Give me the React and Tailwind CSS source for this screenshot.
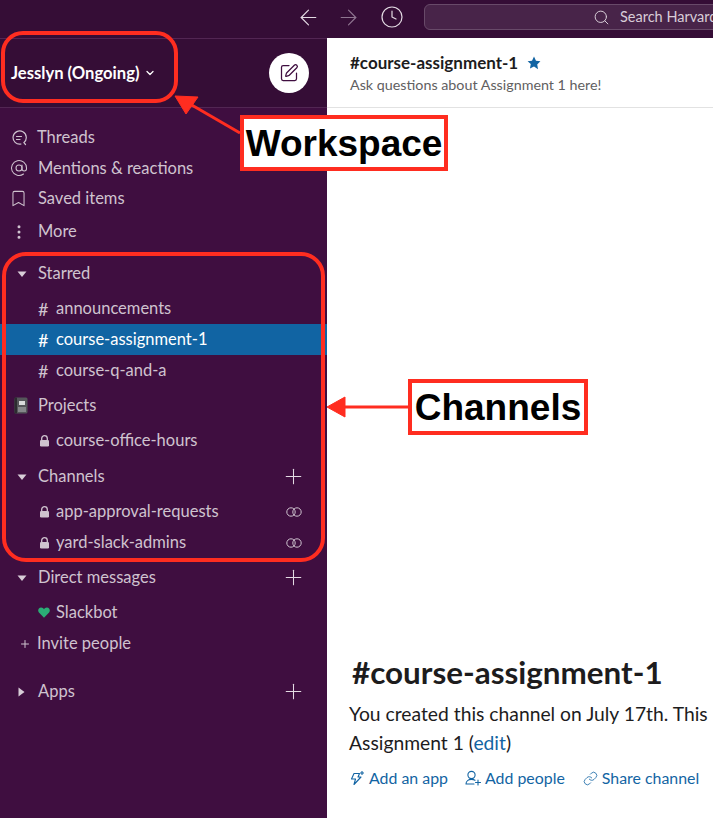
import React from 'react';
import { ArrowLeft, ArrowRight, AtSign, Bookmark, ChevronDown, Clock, EllipsisVertical, Link, Plus, Search, SquarePen } from 'lucide-react';

const Caret = ({ open = true }) => (
  <svg width="10" height="10" viewBox="0 0 10 10" className="text-[#d8cdd8]">
    {open ? <path d="M0.5 2.5h9L5 8z" fill="currentColor" /> : <path d="M1.5 0.5v9L7.5 5z" fill="currentColor" />}
  </svg>
);

const HashIcon = () => <span className="w-[18px] text-[18px] leading-none">#</span>;

const LockIcon = () => (
  <span className="flex w-[18px]">
    <svg width="11" height="12" viewBox="0 0 11 12" className="ml-[1px]">
      <path d="M2.7 5V3.500a2.800 2.800 0 0 1 5.600 0V5" fill="none" stroke="#cfc3cf" strokeWidth="1.3" />
      <rect x="1" y="5" width="9" height="6.500" rx="1.300" fill="#cfc3cf" />
    </svg>
  </span>
);

const HeartIcon = () => (
  <span className="flex w-[18px]">
    <svg width="12" height="11" viewBox="0 0 12 11">
      <path d="M6 10.800L.9 5.600C-.600 3.900.300.500 3.100.500 4.500.500 5.400 1.300 6 2.200 6.600 1.300 7.500.500 8.900.500c2.800 0 3.700 3.400 2.200 5.100z" fill="#2bac76" />
    </svg>
  </span>
);

const SharedIcon = () => (
  <svg width="16" height="10" viewBox="0 0 16 10" fill="none" stroke="#cfc3cf" strokeWidth="1">
    <circle cx="5" cy="5" r="4.200" />
    <circle cx="11" cy="5" r="4.200" />
  </svg>
);

const ThreadsIcon = () => (
  <svg width="16" height="16" viewBox="0 0 16 16" fill="none" stroke="#cfc3cf" strokeWidth="1.2" strokeLinecap="round">
    <path d="M14.500 14.500l-1.600-1.900A6.600 6.600 0 1 0 10 14" />
    <path d="M5.500 6.500h5M5.500 9.500h3.500" />
  </svg>
);

const NotebookIcon = () => (
  <svg width="14" height="17" viewBox="0 0 14 17">
    <rect x="0.500" y="0.500" width="13" height="16" rx="1.500" fill="#55565a" />
    <rect x="0.500" y="0.500" width="2.500" height="16" fill="#2c2c30" />
    <rect x="5" y="4" width="6" height="4" fill="#d9dbdc" />
    <rect x="4" y="10" width="8" height="5" fill="#85878a" />
  </svg>
);

const AppIcon = () => (
  <svg width="16" height="16" viewBox="0 0 16 16" fill="none" stroke="currentColor" strokeWidth="1.1" strokeLinejoin="round">
    <path d="M5 3.500h5.500L9 7h3l-7 7.500L6.500 9H2.500z" />
    <path d="M13 1v4M11 3h4" />
  </svg>
);

const AddPersonIcon = () => (
  <svg width="17" height="16" viewBox="0 0 17 16" fill="none" stroke="currentColor" strokeWidth="1.1" strokeLinecap="round">
    <circle cx="6.500" cy="5" r="3.600" />
    <path d="M1 14c0-3 2.400-4.600 5.500-4.600 1.400 0 2.600.3 3.500.9M1 14h8M13 10v5M10.500 12.500h5" />
  </svg>
);

const Row = ({ className = '', children }) => (
  <div className={`flex h-[31px] shrink-0 items-center whitespace-nowrap pr-[21px] text-[16.500px] text-[#cfc3cf] ${className}`}>
    {children}
  </div>
);

const Section = ({ label, open, plus, className = '' }) => (
  <Row className={`pl-[17px] ${className}`}>
    <span className="flex w-[21px]"><Caret open={open} /></span>
    <span className="flex-1">{label}</span>
    {plus && <Plus size={25} strokeWidth={1} className="shrink-0 text-[#e3dae3]" />}
  </Row>
);

const Channel = ({ icon, label, shared, active, className = '' }) => (
  <Row className={`pl-[38px] ${active ? 'bg-[#1164a3] text-white' : ''} ${className}`}>
    {icon}
    <span className="flex-1">{label}</span>
    {shared && <span className="flex w-[25px] justify-center"><SharedIcon /></span>}
  </Row>
);

const Sidebar = () => (
  <aside className="flex w-[327px] shrink-0 flex-col bg-[#3f0e40]">
    <header className="flex h-[70px] shrink-0 items-center justify-between border-y border-[#522653] bg-[#350d36] pl-[11px] pr-[18px]">
      <div className="flex items-center gap-[5px] text-[16.600px] font-bold text-white">
        Jesslyn (Ongoing)
        <ChevronDown size={12} strokeWidth={2.500} />
      </div>
      <div className="flex h-[40px] w-[40px] items-center justify-center rounded-full bg-white">
        <SquarePen size={20} strokeWidth={1.500} className="text-[#3f0e40]" />
      </div>
    </header>
    <nav className="flex flex-col pt-[14px]">
      <Row className="pl-[11px]"><span className="flex w-[26px]"><ThreadsIcon /></span>Threads</Row>
      <Row className="!h-[30px] pl-[10px]"><span className="flex w-[28px]"><AtSign size={18} strokeWidth={1.400} /></span>Mentions &amp; reactions</Row>
      <Row className="pl-[9px]"><span className="flex w-[29px]"><Bookmark size={19} strokeWidth={1.300} /></span>Saved items</Row>
      <Row className="mt-[2px] pl-[10px]"><span className="flex w-[28px]"><EllipsisVertical size={18} strokeWidth={2} /></span>More</Row>
      <Section label="Starred" className="mt-[11px]" />
      <Channel icon={<HashIcon />} label="announcements" className="mt-[4px]" />
      <Channel icon={<HashIcon />} label="course-assignment-1" active />
      <Channel icon={<HashIcon />} label="course-q-and-a" />
      <Row className="mt-[4px] pl-[14px]"><span className="flex w-[24px]"><NotebookIcon /></span>Projects</Row>
      <Channel icon={<LockIcon />} label="course-office-hours" className="mt-[4px]" />
      <Section label="Channels" plus className="mt-[5px]" />
      <Channel icon={<LockIcon />} label="app-approval-requests" shared className="mt-[4px]" />
      <Channel icon={<LockIcon />} label="yard-slack-admins" shared />
      <Section label="Direct messages" plus className="mt-[4px]" />
      <Channel icon={<HeartIcon />} label="Slackbot" className="mt-[4px]" />
      <Row className="pl-[19px]"><Plus size={12} strokeWidth={2} className="mr-[6px] shrink-0" />Invite people</Row>
      <Section label="Apps" open={false} plus className="mt-[17px]" />
    </nav>
  </aside>
);

const Main = () => (
  <main className="flex min-w-0 flex-1 flex-col overflow-hidden border-t border-white bg-white">
    <div className="flex h-[69px] shrink-0 flex-col justify-center border-b border-[#e2e2e2] pl-[23px]">
      <div className="flex items-center gap-[9px] text-[17px] font-bold leading-[22px] text-[#1d1c1d]">
        #course-assignment-1
        <svg width="14" height="14" viewBox="0 0 24 24"><path d="M12 1l3.400 7.200 7.600 1-5.500 5.500 1.400 7.800L12 17.800 5.100 21.500l1.400-7.800L1 9.200l7.600-1z" fill="#1264a3" /></svg>
      </div>
      <p className="text-[14.300px] leading-[21px] text-[#616061]">Ask questions about Assignment 1 here!</p>
    </div>
    <div className="mt-auto whitespace-nowrap pb-[28px] pl-[22px] text-[#1d1c1d]">
      <h1 className="pl-[3px] text-[31.400px] font-bold leading-[36px]">#course-assignment-1</h1>
      <p className="mt-[9px] text-[19.300px] leading-[29px]">You created this channel on July 17th. This</p>
      <p className="text-[19.300px] leading-[29px]">Assignment 1 (<span className="text-[#1264a3]">edit</span>)</p>
      <div className="mt-[9px] flex items-center text-[15.900px] text-[#1264a3]">
        <span className="flex items-center gap-[4px]"><AppIcon />Add an app</span>
        <span className="ml-[17px] flex items-center gap-[3px]"><AddPersonIcon />Add people</span>
        <span className="ml-[18px] flex items-center gap-[4px]"><Link size={15} strokeWidth={1.300} />Share channel</span>
      </div>
    </div>
  </main>
);

// red callouts drawn on top of the screenshot
const Callouts = () => (
  <>
    <div className="absolute left-[1px] top-[31px] h-[72px] w-[177px] rounded-[22px] border-[4px] border-[#ff2d20]" />
    <div className="absolute left-[2px] top-[252px] h-[310px] w-[323px] rounded-[24px] border-[4px] border-[#ff2d20]" />
    <svg className="absolute left-0 top-0" width="713" height="818" fill="#ff2d20" stroke="#ff2d20">
      <path d="M190 104L240 133" strokeWidth="3" fill="none" />
      <path d="M175 96L198 97L186 114z" />
      <path d="M340 407H409" strokeWidth="3" fill="none" />
      <path d="M327 407L345 397V417z" />
    </svg>
    <div className="absolute left-[240px] top-[115px] flex h-[56px] w-[208px] items-center justify-center border-[4px] border-[#ff2d20] bg-white pt-[2px] font-['Liberation_Sans',sans-serif] text-[37px] font-bold text-black">
      Workspace
    </div>
    <div className="absolute left-[408px] top-[379px] flex h-[56px] w-[180px] items-center justify-center border-[4px] border-[#ff2d20] bg-white pt-[2px] font-['Liberation_Sans',sans-serif] text-[37px] font-bold text-black">
      Channels
    </div>
  </>
);

export default function App() {
  return (
    <div className="relative flex h-[818px] w-[713px] flex-col overflow-hidden font-['Lato',sans-serif]">
      <div className="flex h-[38px] shrink-0 items-center bg-[#350d36] pb-[4px] pl-[296px] text-[#e3dae3]">
        <ArrowLeft size={25} strokeWidth={1.100} className="shrink-0" />
        <ArrowRight size={25} strokeWidth={1.100} className="ml-[15px] shrink-0 text-[#8f7590]" />
        <Clock size={24} strokeWidth={1.200} className="ml-[19px] shrink-0" />
        <div className="ml-[20px] flex h-[26px] w-[420px] shrink-0 items-center gap-[10px] rounded-[6px] border border-[#684a69] bg-[#482449] pl-[168px] text-[14.500px] text-[#d8cdd8]">
          <Search size={17} strokeWidth={1.400} className="shrink-0" />
          <span className="whitespace-nowrap">Search Harvard</span>
        </div>
      </div>
      <div className="flex min-h-0 flex-1">
        <Sidebar />
        <Main />
      </div>
      <Callouts />
    </div>
  );
}
